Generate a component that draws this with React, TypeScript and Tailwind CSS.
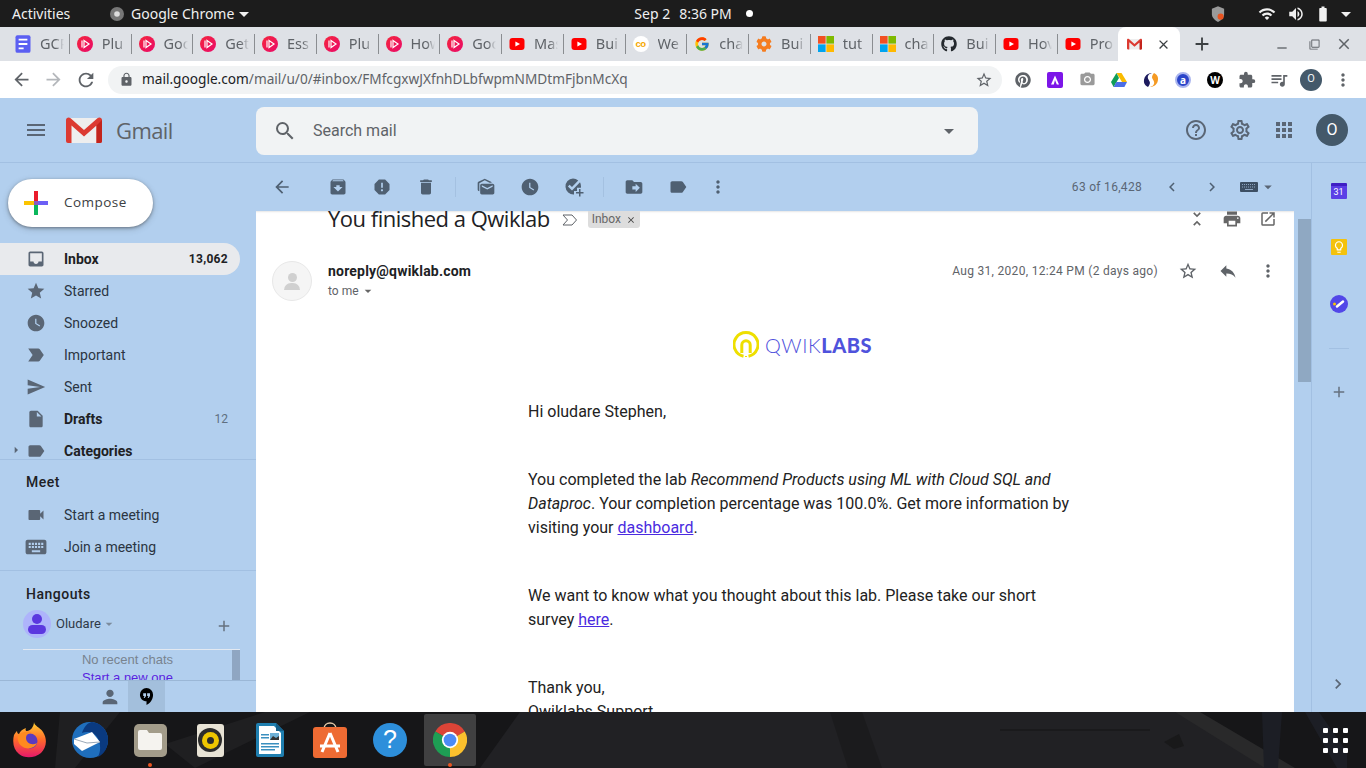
import React from "react";
import {
  MdAdd, MdApps, MdArrowBack, MdArrowDropDown, MdArrowForward, MdCameraAlt, MdChevronLeft, MdChevronRight, MdClose, MdDelete,
  MdExtension, MdHelpOutline, MdInsertDriveFile, MdKeyboard, MdLabel, MdLabelImportant, MdLock, MdMoreVert, MdOpenInNew, MdOutlineSettings,
  MdPerson, MdPrint, MdQueueMusic, MdRefresh, MdReply, MdReport, MdSearch, MdSend, MdStar, MdStarBorder, MdUnfoldLess, MdVideocam, MdWatchLater,
  MdMarkAsUnread, MdDriveFileMove, MdArchive, MdVolumeUp, MdWifi, MdBatteryFull, MdArrowRight, MdFilterNone, MdRemove, MdLightbulbOutline,
} from "react-icons/md";
import { FaGithub, FaPinterest, FaCog } from "react-icons/fa";
import { FcGoogle } from "react-icons/fc";

const roboto = "font-['Roboto',sans-serif]";
const ui = "font-['Noto_Sans',sans-serif]";

const Pink = () => (
  <svg viewBox="0 0 16 16" className="w-4 h-4 shrink-0">
    <defs><linearGradient id="pk" x1="0" y1="0" x2="1" y2="1"><stop offset="0" stopColor="#f4263c" /><stop offset="1" stopColor="#ea0a6a" /></linearGradient></defs>
    <circle cx="8" cy="8" r="8" fill="url(#pk)" />
    <path d="M5 4.500v7M7 4.500l5 3.500-5 3.500z" fill="none" stroke="#fff" strokeWidth="1.200" />
  </svg>
);
const Yt = () => (
  <svg viewBox="0 0 16 16" className="w-4 h-4 shrink-0">
    <rect x="0.500" y="2" width="15" height="12" rx="3" fill="#f00" />
    <path d="M6.400 5.400v5.200L11 8z" fill="#fff" />
  </svg>
);
const Ms = () => (
  <svg viewBox="0 0 16 16" className="w-4 h-4 shrink-0">
    <rect width="7.600" height="7.600" fill="#f25022" />
    <rect x="8.400" width="7.600" height="7.600" fill="#7fba00" />
    <rect y="8.400" width="7.600" height="7.600" fill="#00a4ef" />
    <rect x="8.400" y="8.400" width="7.600" height="7.600" fill="#ffb900" />
  </svg>
);
const GmailM = ({ cls }: { cls: string }) => (
  <svg viewBox="0 0 36 26" className={cls}>
    <path d="M2 1h32v25H2z" fill="#eee" />
    <path d="M18 17 33 3v2L18 19 3 5V3z" fill="#ddd" />
    <path d="M0 3c0-2.500 2.800-3.400 4.600-1.800L18 13 31.400 1.200C33.200-.4 36 .5 36 3v21a2 2 0 0 1-2 2h-3.500V8.500L18 19.500 5.500 8.500V26H2a2 2 0 0 1-2-2z" fill="#dc3a31" />
    <path d="M30.500 8.500 36 3v21a2 2 0 0 1-2 2h-3.500z" fill="#c3241c" />
  </svg>
);
const Doc = () => (
  <svg viewBox="0 0 16 16" className="w-4 h-4 shrink-0 scale-125">
    <rect x="2" y="1" width="12" height="14" rx="1.500" fill="#5b5ff2" />
    <path d="M4.500 4.500h7M4.500 8h7M4.500 11.500h4" stroke="#fff" strokeWidth="1.500" />
  </svg>
);
const Co = () => (
  <span className="w-4 h-4 shrink-0 rounded-full bg-white flex items-center justify-center text-[9.500px] tracking-[-0.5px] leading-none font-bold text-[#f5a800] font-['Liberation_Sans',sans-serif]">co</span>
);

const tabs: [React.ReactNode, string][] = [
  [<Doc />, "GCP"], [<Pink />, "Plu"], [<Pink />, "Goo"], [<Pink />, "Get"], [<Pink />, "Ess"], [<Pink />, "Plu"], [<Pink />, "How"], [<Pink />, "Goo"],
  [<Yt />, "Mas"], [<Yt />, "Bui"], [<Co />, "We"], [<FcGoogle className="w-4 h-4 shrink-0" />, "cha"], [<FaCog className="w-4 h-4 shrink-0 text-[#f57c1f]" />, "Bui"],
  [<Ms />, "tut"], [<Ms />, "cha"], [<FaGithub className="w-4 h-4 shrink-0 text-[#24292e]" />, "Bui"], [<Yt />, "Hov"], [<Yt />, "Pro"],
];

function TopBar() {
  return (
    <div className={`h-[27px] bg-[#1c1c1c] text-[#f0f0f0] text-[14px] flex items-center ${ui} relative`}>
      <span className="ml-3 w-[98px]">Activities</span>
      <svg viewBox="0 0 16 16" className="w-[14px] h-[14px] mr-[7px]">
        <circle cx="8" cy="8" r="8" fill="#777" />
        <circle cx="8" cy="8" r="3.200" fill="#ddd" />
      </svg>
      <span>Google Chrome</span>
      <MdArrowDropDown className="w-6 h-6 -ml-[2px]" />
      <div className="ml-[378px] flex items-center">
        <span>Sep 2</span>
        <span className="ml-[9px]">8:36 PM</span>
        <span className="ml-[14px] w-[7px] h-[7px] rounded-full bg-white" />
      </div>
      <div className="ml-auto flex items-center">
        <svg viewBox="0 0 16 18" className="w-[14px] h-4">
          <path d="M8 0 15 3v6c0 4-3 7-7 9-4-2-7-5-7-9V3z" fill="#9a9a9a" />
          <circle cx="11" cy="12" r="3.500" fill="#e95420" />
        </svg>
        <MdWifi className="w-[18px] h-[18px] ml-[33px]" />
        <MdVolumeUp className="w-[18px] h-[18px] ml-[11px]" />
        <MdBatteryFull className="w-[18px] h-[18px] ml-[9px]" />
        <MdArrowDropDown className="w-6 h-6 ml-[2px] mr-2" />
      </div>
    </div>
  );
}

function TabStrip() {
  return (
    <div className={`h-[34px] bg-[#dee1e6] flex items-stretch pl-2 ${ui}`}>
      {tabs.map(([icon, label], i) => (
        <div key={i} className="w-[61.750px] pl-[7px] flex items-center gap-[9px] relative">
          {icon}
          <span className="w-[24px] overflow-hidden whitespace-nowrap text-[14.500px] text-[#5f6368] [mask-image:linear-gradient(to_right,black_65%,transparent)]">{label}</span>
          <span className="absolute right-0 top-[7px] h-[20px] w-px bg-[#8a8d91]" />
        </div>
      ))}
      <div className="w-[62px] -ml-[2px] bg-white rounded-t-lg flex items-center pl-[9px] relative">
        <GmailM cls="w-[15px] h-[12px]" />
        <MdClose className="w-[15px] h-[15px] ml-auto mr-[9px] text-[#3c4043]" />
      </div>
      <MdAdd className="w-[22px] h-[22px] ml-[11px] self-center text-[#3c4043]" />
      <MdRemove className="w-4 h-4 ml-[61px] self-center mt-2 text-[#5f6368]" />
      <MdFilterNone className="w-[11px] h-[11px] ml-[19px] self-center text-[#5f6368]" />
      <MdClose className="w-[18px] h-[18px] ml-[15px] self-center text-[#5f6368]" />
    </div>
  );
}

const ToolBtn = ({ children }: { children: React.ReactNode }) => (
  <div className="w-8 flex items-center justify-center">{children}</div>
);

function ChromeBar() {
  return (
    <div className={`h-[37px] bg-white flex items-center ${ui}`}>
      <MdArrowBack className="w-[21px] h-[21px] ml-[11px] text-[#5f6368]" />
      <MdArrowForward className="w-[21px] h-[21px] ml-[11px] text-[#b4b7bb]" />
      <MdRefresh className="w-[22px] h-[22px] ml-[11px] text-[#5f6368]" />
      <div className="ml-[11px] w-[894px] h-[28px] rounded-full bg-[#f1f3f4] flex items-center">
        <MdLock className="ml-[11px] w-[15px] h-[15px] text-[#5f6368]" />
        <span className="ml-2 text-[13.650px] text-[#5f6368] whitespace-nowrap">
          <span className="text-[#202124]">mail.google.com</span>/mail/u/0/#inbox/FMfcgxwJXfnhDLbfwpmNMDtmFjbnMcXq
        </span>
        <MdStarBorder className="ml-auto mr-[9px] w-[18px] h-[18px] text-[#5f6368]" />
      </div>
      <div className="flex items-center ml-[5px]">
        <ToolBtn><FaPinterest className="w-4 h-4 text-[#5f6368]" /></ToolBtn>
        <ToolBtn>
          <svg viewBox="0 0 16 16" className="w-4 h-4"><rect width="16" height="16" rx="2" fill="#7c16e8" /><path d="M8 3.500 12 12.500H9.800L8 8 6.800 12.500H4z" fill="#fff" /></svg>
        </ToolBtn>
        <ToolBtn><MdCameraAlt className="w-[17px] h-[17px] text-[#9a9a9a]" /></ToolBtn>
        <ToolBtn>
          <svg viewBox="0 0 16 14" className="w-4 h-[14px]"><path d="M5.500 0h5L16 9h-5z" fill="#f9bb00" /><path d="M5.500 0 0 9l2.600 5L8 5z" fill="#0f9d58" /><path d="M2.600 14h10.800L16 9H5.300z" fill="#4c6fe6" /></svg>
        </ToolBtn>
        <ToolBtn>
          <svg viewBox="0 0 16 16" className="w-4 h-4"><path d="M9 1C5 2 4 5 5.500 7.500S8 11 5 15C1.500 13.500 0 10 1.500 6 2.500 3.500 5 1 9 1z" fill="#1d1b5e" /><path d="M7 15c4-1 5-4 3.500-6.500S8 5 11 1c3.500 1.500 5 5 3.500 9-1 2.500-3.500 5-7.500 5z" fill="#f59a23" /></svg>
        </ToolBtn>
        <ToolBtn>
          <span className="w-4 h-4 rounded-full bg-[#2b45c9] border-2 border-[#aab5ee] flex items-center justify-center text-[10px] leading-none font-bold text-white">a</span>
        </ToolBtn>
        <ToolBtn>
          <span className="w-4 h-4 rounded-full bg-black flex items-center justify-center text-[10px] leading-none font-bold text-white">W</span>
        </ToolBtn>
        <ToolBtn><MdExtension className="w-[18px] h-[18px] text-[#5f6368]" /></ToolBtn>
        <ToolBtn><MdQueueMusic className="w-[20px] h-[20px] text-[#5f6368]" /></ToolBtn>
        <ToolBtn>
          <span className={`w-[22px] h-[22px] rounded-full bg-[#44596a] text-[#f1f3f4] text-[11px] flex items-center justify-center ${roboto}`}>O</span>
        </ToolBtn>
        <ToolBtn><MdMoreVert className="w-5 h-5 text-[#5f6368]" /></ToolBtn>
      </div>
    </div>
  );
}

function GmailHeader() {
  return (
    <div className="h-[65px] shrink-0 border-b border-[#a2c0e2] flex items-center">
      <div className="w-[256px] flex items-center">
        <svg viewBox="0 0 24 24" className="w-6 h-6 ml-6 text-[#5a6675]" fill="currentColor"><path d="M3 18h18v-2H3v2zm0-5h18v-2H3v2zm0-7v2h18V6H3z" /></svg>
        <GmailM cls="w-[36px] h-[26px] ml-[18px]" />
        <span className="ml-[14px] text-[22px] text-[#5f6368] font-['Open_Sans',sans-serif] tracking-[-0.6px]">Gmail</span>
      </div>
      <div className={`w-[722px] h-12 mt-[1px] bg-[#f1f3f4] rounded-lg flex items-center ${roboto}`}>
        <MdSearch className="ml-[17px] w-6 h-6 text-[#5f6368]" />
        <span className="ml-[16px] mt-[1px] text-[16px] text-[#5f6368]">Search mail</span>
        <MdArrowDropDown className="ml-auto mr-[17px] w-6 h-6 text-[#5f6368]" />
      </div>
      <MdHelpOutline className="ml-[206px] w-6 h-6 text-[#5a6675]" />
      <MdOutlineSettings className="ml-[20px] w-6 h-6 text-[#5a6675]" />
      <MdApps className="ml-[20px] w-6 h-6 text-[#5a6675]" />
      <span className={`ml-[20px] w-8 h-8 rounded-full bg-[#44596a] text-white text-[16px] flex items-center justify-center ${roboto}`}>O</span>
    </div>
  );
}

const NavRow = ({ icon, label, count, bold, active }: { icon: React.ReactNode; label: string; count?: string; bold?: boolean; active?: boolean }) => (
  <div className={`h-8 w-[240px] rounded-r-full flex items-center text-[14px] ${active ? "bg-[#e8eaed]" : ""} ${bold ? "font-bold text-[#202124]" : "text-[#2b3542]"}`}>
    <div className="w-[72px] pl-[26px] pr-[26px] -mr-[8px] flex items-center justify-center shrink-0 text-[#5a6675]">{icon}</div>
    <span>{label}</span>
    {count && <span className={`ml-auto mr-3 text-[12px] ${active ? "font-bold tracking-[0.3px]" : "font-normal text-[#5f6f80]"}`}>{count}</span>}
  </div>
);

function Sidebar() {
  const ic = "w-5 h-5 shrink-0";
  return (
    <div className={`w-[256px] shrink-0 flex flex-col overflow-hidden ${roboto}`}>
      <div className="mt-4 ml-2 w-[145px] h-12 rounded-full bg-white shadow-[0_1px_3px_rgba(60,64,67,.5),0_2px_6px_rgba(60,64,67,.25)] flex items-center shrink-0">
        <svg viewBox="0 0 24 24" className="w-6 h-6 ml-4 shrink-0">
          <path d="M10 0h4v10h-4z" fill="#ea1c2c" />
          <path d="M14 10h10v4H14z" fill="#6c5ff5" />
          <path d="M10 14h4v10h-4z" fill="#0bb75c" />
          <path d="M0 10h10v4H0z" fill="#fbc400" />
          <path d="M10 10h4v4h-4z" fill="#8a5ac0" />
        </svg>
        <span className="ml-4 -mt-[2px] text-[13.500px] tracking-[0.45px] font-medium text-[#3c4043] font-['Open_Sans',sans-serif]">Compose</span>
      </div>
      <div className="mt-4 h-[217px] shrink-0 overflow-hidden border-b border-[#a2c0e2] relative">
        <NavRow active bold label="Inbox" count="13,062" icon={
          <svg viewBox="0 0 24 24" className={ic} fill="currentColor"><path d="M19 3H5c-1.100 0-2 .9-2 2v14c0 1.100.9 2 2 2h14c1.100 0 2-.9 2-2V5c0-1.100-.9-2-2-2zm0 12h-4c0 1.660-1.340 3-3 3s-3-1.340-3-3H5V5h14z" /></svg>
        } />
        <NavRow label="Starred" icon={<MdStar className={ic} />} />
        <NavRow label="Snoozed" icon={<MdWatchLater className={ic} />} />
        <NavRow label="Important" icon={<MdLabelImportant className={`${ic} scale-110`} />} />
        <NavRow label="Sent" icon={<MdSend className={ic} />} />
        <NavRow bold label="Drafts" count="12" icon={<MdInsertDriveFile className={ic} />} />
        <NavRow bold label="Categories" icon={<MdLabel className={ic} />} />
        <MdArrowRight className="absolute left-[8px] top-[199px] w-4 h-4 text-[#5a6675]" />
      </div>
      <div className="h-[111px] shrink-0 border-b border-[#a2c0e2] pt-[13px]">
        <div className="pl-[26px] h-[18px] text-[14px] leading-[18px] font-medium tracking-[0.5px] text-[#202124]">Meet</div>
        <div className="mt-[8px]">
          <NavRow label="Start a meeting" icon={<MdVideocam className={ic} />} />
          <NavRow label="Join a meeting" icon={<MdKeyboard className={`${ic} scale-125`} />} />
        </div>
      </div>
      <div className="h-[109px] shrink-0 overflow-hidden">
        <div className="pl-[26px] mt-[14px] h-[18px] text-[14px] leading-[18px] font-medium tracking-[0.5px] text-[#202124]">Hangouts</div>
        <div className="mt-[7px] ml-[23px] w-[217px] h-[28px] flex items-center">
          <span className="w-7 h-7 rounded-full bg-[#aeb4fb] flex flex-col items-center justify-center">
            <span className="w-[10px] h-[10px] rounded-full bg-[#5b37df]" />
            <span className="w-[18px] h-[9px] rounded-full bg-[#5b37df] mt-[1px]" />
          </span>
          <span className="ml-[5px] text-[13px] text-[#2f3947]">Oludare</span>
          <MdArrowDropDown className="w-4 h-4 text-[#7c8b9c]" />
          <MdAdd className="ml-auto mt-1 mr-[7px] w-[18px] h-[18px] text-[#66727f]" />
        </div>
        <div className="mt-[11px] ml-[23px] w-[217px] h-[40px] border-t border-[#e3e9f1] relative text-[13px] text-center font-['Liberation_Sans',sans-serif] pt-[1px]">
          <div className="leading-[18px] text-[#78838f] pr-[8px]">No recent chats</div>
          <div className="leading-[18px] text-[#5a1fe0] pr-[8px]">Start a new one</div>
          <div className="absolute right-0 top-0 w-2 h-full bg-[#8fa6c2]" />
        </div>
      </div>
      <div className="h-[32px] shrink-0 border-t border-[#9bb7d6] flex relative bg-[#b2cfee]">
        <div className="ml-[92px] w-[36px] flex items-center justify-center">
          <MdPerson className="w-[22px] h-[22px] text-[#5a6675]" />
        </div>
        <div className="w-[37px] bg-[#a3bfdc] flex items-center justify-center">
          <svg viewBox="0 0 16 18" className="w-[15px] h-[17px]"><path d="M8 0a7 7 0 0 0-7 7c0 3.900 3.100 7 7 7v4c3.500-1.700 7-5.500 7-11a7 7 0 0 0-7-7z" fill="#000" /><path d="M4.500 5.500h3v3l-1.500 2h-1l.8-2H4.500zM8.700 5.500h3v3l-1.500 2h-1l.8-2H8.700z" fill="#b2cfee" /></svg>
        </div>
      </div>
    </div>
  );
}

const TBtn = ({ children, cls = "" }: { children: React.ReactNode; cls?: string }) => (
  <div className={`w-11 flex items-center justify-center shrink-0 text-[#4f6072] ${cls}`}>{children}</div>
);
const Sep = () => <span className="ml-[7px] w-px h-5 bg-[#a4c1e1] shrink-0" />;

function MailToolbar() {
  const c = "w-5 h-5";
  return (
    <div className={`h-[48px] shrink-0 flex items-center ${roboto}`}>
      <TBtn cls="ml-1"><MdArrowBack className={c} /></TBtn>
      <TBtn cls="ml-3"><MdArchive className={c} /></TBtn>
      <TBtn><MdReport className={c} /></TBtn>
      <TBtn><MdDelete className={c} /></TBtn>
      <Sep />
      <TBtn cls="ml-2"><MdMarkAsUnread className={c} /></TBtn>
      <TBtn><MdWatchLater className={c} /></TBtn>
      <TBtn>
        <svg viewBox="0 0 20 20" className={c} fill="currentColor">
          <path d="M9 1.500a8 8 0 0 1 5.200 1.900L8 10 5.600 7.700 3.900 9.400 8 13.500l8-8.300A8 8 0 0 1 17 9.500c0 .4 0 .8-.1 1.200H13v3.300h-3v3.400a8 8 0 1 1-1-16z" />
          <path d="M15 12h1.500v3H19.500v1.500h-3v3H15v-3h-3V15h3z" />
        </svg>
      </TBtn>
      <Sep />
      <TBtn cls="ml-2"><MdDriveFileMove className={c} /></TBtn>
      <TBtn><MdLabel className={c} /></TBtn>
      <div className="ml-1 w-7 flex justify-center text-[#4f6072]"><MdMoreVert className={c} /></div>
      <span className="ml-auto text-[12px] tracking-[0.3px] text-[#5a6675]">63 of 16,428</span>
      <MdChevronLeft className="ml-[21px] w-[18px] h-[18px] text-[#4f6072]" />
      <MdChevronRight className="ml-[22px] w-[18px] h-[18px] text-[#4f6072]" />
      <svg viewBox="0 0 18 10" className="ml-[19px] w-[18px] h-[10px]">
        <rect width="18" height="10" rx="1" fill="#3d4f63" />
        <path d="M2 2.500h14M2 5h14" stroke="#8fa6c2" strokeDasharray="1 1" />
        <path d="M5 7.500h8" stroke="#8fa6c2" />
      </svg>
      <MdArrowDropDown className="w-[18px] h-[18px] text-[#5a6675] mr-[17px] ml-[1px]" />
    </div>
  );
}

function Mail() {
  return (
    <div className={`flex-1 bg-white overflow-hidden shadow-[inset_0_2px_2px_-1px_rgba(0,0,0,.1)] ${roboto}`}>
      <div className="h-[17px] flex items-center relative">
        <span className="ml-[72px] -mt-[3px] text-[22px] leading-[17px] text-[#202124] font-['Open_Sans',sans-serif] tracking-[-0.5px]">You finished a Qwiklab</span>
        <svg viewBox="0 0 16 12" className="ml-[12px] w-4 h-3"><path d="M1 1h9l4.500 5L10 11H1l4.500-5z" fill="none" stroke="#5f6368" strokeWidth="1" /></svg>
        <span className="ml-[10px] h-[17px] w-[52px] rounded-b-[3px] bg-[#dddddd] text-[#666] text-[12px] leading-[15px] flex items-start pl-1 pt-[1px]">Inbox<MdClose className="w-[10px] h-[10px] ml-[5px] mt-[3px] text-[#444]" /></span>
        <div className="ml-auto flex items-center text-[#666] mt-[-1px]">
          <MdUnfoldLess className="w-5 h-5" />
          <MdPrint className="ml-[15px] w-5 h-5" />
          <MdOpenInNew className="ml-[17px] w-[18px] h-[18px] mr-[17px]" />
        </div>
      </div>
      <div className="mt-[33px] flex items-start">
        <div className="ml-4 w-10 h-10 rounded-full bg-[#f5f5f5] border border-[#e8e8e8] flex flex-col items-center justify-center">
          <span className="w-[9px] h-[9px] rounded-full bg-[#d0d0d0]" />
          <span className="w-[16px] h-[7px] rounded-t-full bg-[#d0d0d0] mt-[1px]" />
        </div>
        <div className="ml-4">
          <div className="h-5 leading-5 text-[14px] font-bold tracking-[0.2px] text-[#202124]">noreply@qwiklab.com</div>
          <div className="h-5 leading-5 text-[12px] text-[#5f6368] flex items-center">to me<MdArrowDropDown className="w-4 h-4 ml-[1px] text-[#666]" /></div>
        </div>
        <div className="ml-auto flex items-center h-5">
          <span className="text-[12px] tracking-[0.3px] text-[#5f6368]">Aug 31, 2020, 12:24 PM (2 days ago)</span>
          <MdStarBorder className="ml-[20px] w-5 h-5 text-[#5f6368]" />
          <MdReply className="ml-[20px] w-5 h-5 text-[#5f6368]" />
          <MdMoreVert className="ml-[20px] w-5 h-5 mr-4 text-[#5f6368]" />
        </div>
      </div>
      <div className="mt-[29px] ml-[477px] h-[30px] flex items-center">
        <svg viewBox="0 0 26 28" className="w-[26px] h-[28px] shrink-0">
          <path d="M10.500 26.300A12 12 0 1 1 15.500 26.300" fill="none" stroke="#eedf00" strokeWidth="3" transform="translate(0 -1)" />
          <path d="M8.800 22V14a4.200 4.200 0 0 1 8.400 0v8" fill="none" stroke="#eedf00" strokeWidth="3" />
          <path d="M13 26v-1" stroke="#eedf00" strokeWidth="2" />
        </svg>
        <span className="ml-[6px] text-[20px] leading-none tracking-[0.55px] text-[#4f52dc] font-['Lato',sans-serif] font-light whitespace-nowrap">QWIK<span className="font-black">LABS</span></span>
      </div>
      <div className="mt-[40px] ml-[272px] w-[560px] text-[16px] leading-[24px] text-[#222]">
        <p>Hi oludare Stephen,</p>
        <p className="mt-[44px]">You completed the lab <i>Recommend Products using ML with Cloud SQL and<br />Dataproc</i>. Your completion percentage was 100.0%. Get more information by<br />visiting your <span className="text-[#4a2be0] underline">dashboard</span>.</p>
        <p className="mt-[44px]">We want to know what you thought about this lab. Please take our short<br />survey <span className="text-[#4a2be0] underline">here</span>.</p>
        <p className="mt-[44px]">Thank you,<br />Qwiklabs Support</p>
      </div>
    </div>
  );
}

function RightPanel() {
  return (
    <div className={`w-[55px] shrink-0 border-l border-[#a2c0e2] flex flex-col items-center pr-[1px] pb-[18px] ${roboto}`}>
      <div className="mt-[20px] w-4 h-4 bg-[#5b3fe6] rounded-[1px] border-t-[3px] border-[#3f1fc4] text-white text-[9px] leading-[12px] text-center">31</div>
      <div className="mt-[40px] w-4 h-4 bg-[#f4c20d] rounded-[1px] flex items-center justify-center">
        <MdLightbulbOutline className="w-[14px] h-[14px] text-white" />
      </div>
      <div className="mt-[40px] w-[18px] h-[18px] rounded-full bg-[#5247e8] flex items-center justify-center">
        <svg viewBox="0 0 18 18" className="w-[18px] h-[18px]"><path d="M7 11.500 13 6.500" stroke="#fff" strokeWidth="2.500" strokeLinecap="round" /><circle cx="4.500" cy="9" r="1.500" fill="#fbc400" /></svg>
      </div>
      <div className="mt-[35px] w-5 h-px bg-[#a2c0e2]" />
      <MdAdd className="mt-[34px] w-[18px] h-[18px] text-[#66727f]" />
      <MdChevronRight className="mt-auto w-5 h-5 text-[#5a6675] -ml-[2px]" />
    </div>
  );
}

const Chrome = () => (
  <svg viewBox="0 0 48 48" className="w-[34px] h-[34px]">
    <path d="M24 24 3.200 12A24 24 0 0 1 44.800 12z" fill="#db4437" />
    <path d="M24 24 44.800 12A24 24 0 0 1 24 48z" fill="#fbc02d" />
    <path d="M24 24V48A24 24 0 0 1 3.200 12z" fill="#1e9e54" />
    <circle cx="24" cy="24" r="11.500" fill="#fff" />
    <circle cx="24" cy="24" r="9" fill="#4c8bf5" />
  </svg>
);

const DockItem = ({ children, dot, active }: { children: React.ReactNode; dot?: boolean; active?: boolean }) => (
  <div className="w-[60px] h-[56px] flex items-center justify-center relative">
    {active && <div className="absolute left-1 right-1 top-[2px] bottom-[2px] bg-white/[0.18] rounded-[2px]" />}
    <div className="relative flex items-center justify-center">{children}</div>
    {dot && <span className="absolute left-[28px] bottom-[1px] w-1 h-1 rounded-full bg-[#e95420]" />}
  </div>
);

function Dock() {
  return (
    <div className="h-[56px] shrink-0 bg-[#161618] flex items-center relative overflow-hidden">
      <svg viewBox="0 0 1366 56" className="absolute inset-0 w-full h-full" aria-hidden="true">
        <path d="M60 0h60l-45 56H55zM165 32 265 0h45L195 56z" fill="#1f1f21" />
        <path d="M520 0h655l110 56H480z" fill="#212124" />
        <path d="M1000 18h150" stroke="#19191a" strokeWidth="1.500" />
        <path d="M1175 0h25l95 56h-30z" fill="#29292a" />
        <path d="M1164 30l15-8 5 12-10 3z" fill="#19191a" />
        <path d="M830 0h32l20 56h-34z" fill="#1b1b1d" />
        <path d="M1262 0h20l-4 56h-14zM1305 0h14l28 40v16h-10z" fill="#1c1e25" />
      </svg>
      <DockItem>
        <svg viewBox="0 0 34 36" className="w-[34px] h-9">
          <defs>
            <linearGradient id="ff" x1="0.500" y1="0" x2="0.500" y2="1"><stop offset="0" stopColor="#ffd233" /><stop offset=".5" stopColor="#ff6a2a" /><stop offset="1" stopColor="#e5186a" /></linearGradient>
          </defs>
          <path d="M21 0c0 4 6 5 9 10 5 8 3 16-2 21-6 5-16 6-22 1C1 28-1 21 1 13c1-2 2-3 3-4 0 2 1 3 2 3 1-3 4-5 7-6-1 2 0 3 1 3 3 0 7-4 7-9z" fill="url(#ff)" />
          <circle cx="17" cy="19" r="7.500" fill="#5b3bbf" />
          <path d="M5 14c3-4 10-6 14-3-4 0-6 2-6 5 0 5 6 8 11 5-2 5-9 7-14 4-4-2-6-7-5-11z" fill="#ff8a1f" />
        </svg>
      </DockItem>
      <DockItem>
        <svg viewBox="0 0 36 36" className="w-9 h-9">
          <circle cx="18" cy="18" r="18" fill="#1f6fbd" />
          <path d="M20 0a18 18 0 0 1 16 18c0 8-4 14-10 17 3-6 3-14-1-20C22 10 14 9 10 11 12 5 15 1 20 0z" fill="#0a3a80" />
          <path d="M2 17 20 10l8 10-18 9-8-7z" fill="#fff" />
          <path d="M2 17l13 4 13-1" fill="none" stroke="#9aa9b8" strokeWidth="1" />
        </svg>
      </DockItem>
      <DockItem dot>
        <div className="w-[33px] h-[33px] rounded-[5px] bg-[#a39c8a] flex items-center justify-center">
          <svg viewBox="0 0 24 20" className="w-6 h-5"><path d="M0 2a2 2 0 0 1 2-2h7l2 3h11a2 2 0 0 1 2 2v13a2 2 0 0 1-2 2H2a2 2 0 0 1-2-2z" fill="#f5f3ef" /></svg>
        </div>
      </DockItem>
      <DockItem>
        <div className="w-[27px] h-[33px] rounded-[3px] bg-[#e8e3d5] flex items-center justify-center">
          <span className="w-6 h-6 rounded-full bg-[#2c2c2c] flex items-center justify-center">
            <span className="w-[17px] h-[17px] rounded-full bg-[#efc600] flex items-center justify-center"><span className="w-[7px] h-[7px] rounded-full bg-[#2c2c2c]" /></span>
          </span>
        </div>
      </DockItem>
      <DockItem>
        <svg viewBox="0 0 28 34" className="w-7 h-[34px]">
          <path d="M2 0h18l8 8v24a2 2 0 0 1-2 2H2a2 2 0 0 1-2-2V2a2 2 0 0 1 2-2z" fill="#1f7fb0" />
          <path d="M3 3h15l7 7v20a1 1 0 0 1-1 1H3z" fill="#fff" />
          <path d="M20 0l8 8h-8z" fill="#15608a" />
          <rect x="5" y="11" width="8" height="1.500" fill="#3a8fbf" /><rect x="5" y="14" width="8" height="1.500" fill="#3a8fbf" />
          <rect x="14" y="10" width="9" height="7" fill="#6db0d6" /><path d="M14 17l3-4 3 2 3-2v4z" fill="#333" />
          <rect x="5" y="20" width="18" height="1.500" fill="#3a8fbf" /><rect x="5" y="23" width="18" height="1.500" fill="#3a8fbf" /><rect x="5" y="26" width="14" height="1.500" fill="#3a8fbf" />
        </svg>
      </DockItem>
      <DockItem>
        <svg viewBox="0 0 34 36" className="w-[34px] h-9">
          <path d="M11 7c0-8 12-8 12 0" fill="none" stroke="#e5c9a8" strokeWidth="1.500" />
          <rect y="5" width="34" height="31" rx="3" fill="#ee6b33" />
          <path d="M17 11 9 30M17 11l8 19M7 24h20" stroke="#fff" strokeWidth="3" fill="none" />
        </svg>
      </DockItem>
      <DockItem>
        <span className="w-[34px] h-[34px] rounded-full bg-[#2d8fdb] text-white text-[25px] flex items-center justify-center font-['Liberation_Sans',sans-serif]">?</span>
      </DockItem>
      <DockItem dot active><Chrome /></DockItem>
      <div className="ml-auto mr-[18px] grid grid-cols-3 gap-[5px] relative">
        {Array.from({ length: 9 }).map((_, i) => (
          <span key={i} className="w-[5px] h-[5px] bg-white rounded-[1px]" />
        ))}
      </div>
    </div>
  );
}

export default function App() {
  return (
    <div className="w-[1366px] h-[768px] flex flex-col overflow-hidden bg-[#b2cfee]">
      <TopBar />
      <TabStrip />
      <ChromeBar />
      <div className="flex-1 flex flex-col min-h-0">
        <GmailHeader />
        <div className="flex-1 flex min-h-0">
          <Sidebar />
          <div className="w-[1038px] shrink-0 flex flex-col min-h-0">
            <MailToolbar />
            <Mail />
          </div>
          <div className="w-[17px] shrink-0 pt-[56px] pl-[4px]">
            <div className="h-[163px] bg-[#8fa8c2]" />
          </div>
          <RightPanel />
        </div>
      </div>
      <Dock />
    </div>
  );
}
